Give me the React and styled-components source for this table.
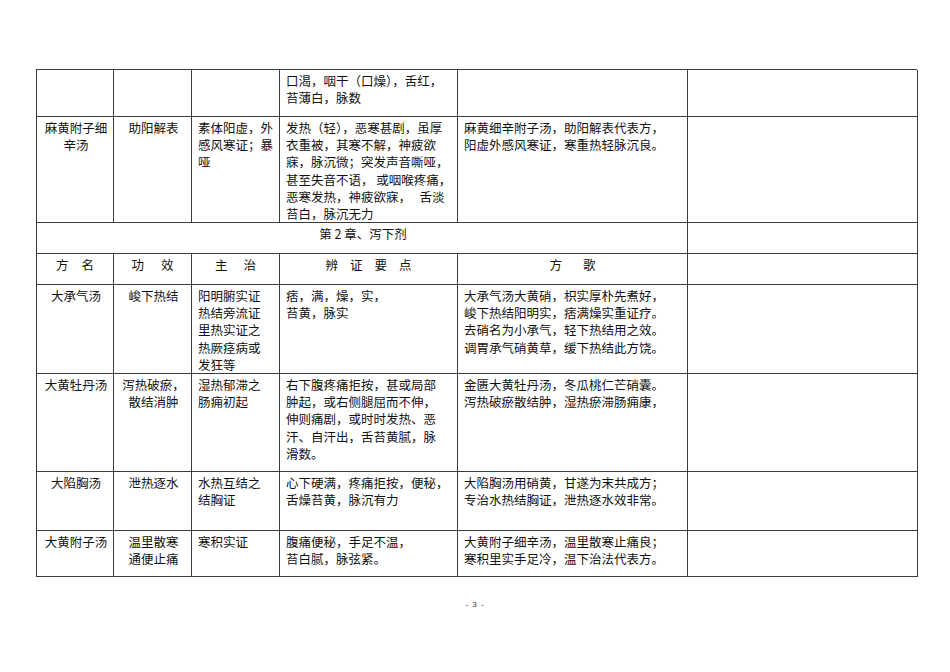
import React from 'react';
import styled, { createGlobalStyle } from 'styled-components';

const GlobalStyle = createGlobalStyle`
  html, body {
    margin: 0;
    padding: 0;
    background: #ffffff;
  }
  body {
    font-family: "Noto Sans CJK SC", "Liberation Serif", serif;
    color: #111111;
  }
`;

const Page = styled.div`
  width: 950px;
  height: 672px;
  box-sizing: border-box;
  padding: 70px 0 0 36px;
  background: #ffffff;
`;

const Sheet = styled.div`
  display: grid;
  grid-template-columns: 77px 78px 88px 178px 230px 230px;
  grid-template-rows: 47px 106px 31px 31px 89px 98px 59px 46px;
  width: 881px;
  box-sizing: border-box;
  border-top: 1px solid #3c3c3c;
  border-left: 1px solid #3c3c3c;
  margin-top: -1px;
`;

const Cell = styled.div`
  grid-column: span ${(p) => p.$span || 1};
  box-sizing: border-box;
  border-right: 1px solid #3c3c3c;
  border-bottom: 1px solid #3c3c3c;
  padding: 2px 4px 0 6px;
  font-size: 12.5px;
  line-height: 17.2px;
  white-space: pre;
  text-align: ${(p) => (p.$center ? 'center' : 'left')};
  overflow: hidden;
`;

const Chapter = styled(Cell)`
  text-align: center;
`;

const HeadCell = styled(Cell)`
  display: flex;
  justify-content: center;
  align-items: flex-start;
  gap: ${(p) => p.$gap}px;
  padding: 2px 0 0 0;
`;

const PageNumber = styled.div`
  margin: 23px 36px 0 0;
  text-align: center;
  font-family: "Liberation Sans", sans-serif;
  font-size: 8px;
  color: #333333;
  letter-spacing: 1px;
`;

const headers = [
  { chars: ['方', '名'], gap: 13 },
  { chars: ['功', '效'], gap: 17 },
  { chars: ['主', '治'], gap: 16 },
  { chars: ['辨', '证', '要', '点'], gap: 12 },
  { chars: ['方', '歌'], gap: 21 },
  { chars: [], gap: 0 },
];

const topRows = [
  ['', '', '', '口渴，咽干（口燥），舌红，\n苔薄白，脉数', '', ''],
  [
    '麻黄附子细\n辛汤',
    '助阳解表',
    '素体阳虚，外\n感风寒证；暴\n哑',
    '发热（轻），恶寒甚剧，虽厚\n衣重被，其寒不解，神疲欲\n寐，脉沉微；突发声音嘶哑，\n甚至失音不语， 或咽喉疼痛，\n恶寒发热，神疲欲寐，   舌淡\n苔白，脉沉无力',
    '麻黄细辛附子汤，助阳解表代表方，\n阳虚外感风寒证，寒重热轻脉沉良。',
    '',
  ],
];

const bottomRows = [
  [
    '大承气汤',
    '峻下热结',
    '阳明腑实证\n热结旁流证\n里热实证之\n热厥痉病或\n发狂等',
    '痞，满，燥，实，\n苔黄，脉实',
    '大承气汤大黄硝，枳实厚朴先煮好，\n峻下热结阳明实，痞满燥实重证疗。\n去硝名为小承气，轻下热结用之效。\n调胃承气硝黄草，缓下热结此方饶。',
    '',
  ],
  [
    '大黄牡丹汤',
    '泻热破瘀，\n散结消肿',
    '湿热郁滞之\n肠痈初起',
    '右下腹疼痛拒按，甚或局部\n肿起，或右侧腿屈而不伸，\n伸则痛剧，或时时发热、恶\n汗、自汗出，舌苔黄腻，脉\n滑数。',
    '金匮大黄牡丹汤，冬瓜桃仁芒硝囊。\n泻热破瘀散结肿，湿热瘀滞肠痈康，',
    '',
  ],
  [
    '大陷胸汤',
    '泄热逐水',
    '水热互结之\n结胸证',
    '心下硬满，疼痛拒按，便秘，\n舌燥苔黄，脉沉有力',
    '大陷胸汤用硝黄，甘遂为末共成方；\n专治水热结胸证，泄热逐水效非常。',
    '',
  ],
  [
    '大黄附子汤',
    '温里散寒\n通便止痛',
    '寒积实证',
    '腹痛便秘，手足不温，\n苔白腻，脉弦紧。',
    '大黄附子细辛汤，温里散寒止痛良；\n寒积里实手足冷，温下治法代表方。',
    '',
  ],
];

const renderRow = (row, r) =>
  row.map((text, c) => (
    <Cell key={`${r}-${c}`} $center={c < 2}>
      {text}
    </Cell>
  ));

const App = () => {
  return (
    <>
      <GlobalStyle />
      <Page>
        <Sheet>
          {topRows.map((row, r) => renderRow(row, `t${r}`))}
          <Chapter $span={5}>第 2 章、泻下剂</Chapter>
          <Cell />
          {headers.map((h, i) => (
            <HeadCell key={`h${i}`} $gap={h.gap}>
              {h.chars.map((ch, j) => (
                <span key={j}>{ch}</span>
              ))}
            </HeadCell>
          ))}
          {bottomRows.map((row, r) => renderRow(row, `b${r}`))}
        </Sheet>
        <PageNumber>- 3 -</PageNumber>
      </Page>
    </>
  );
};

export default App;
